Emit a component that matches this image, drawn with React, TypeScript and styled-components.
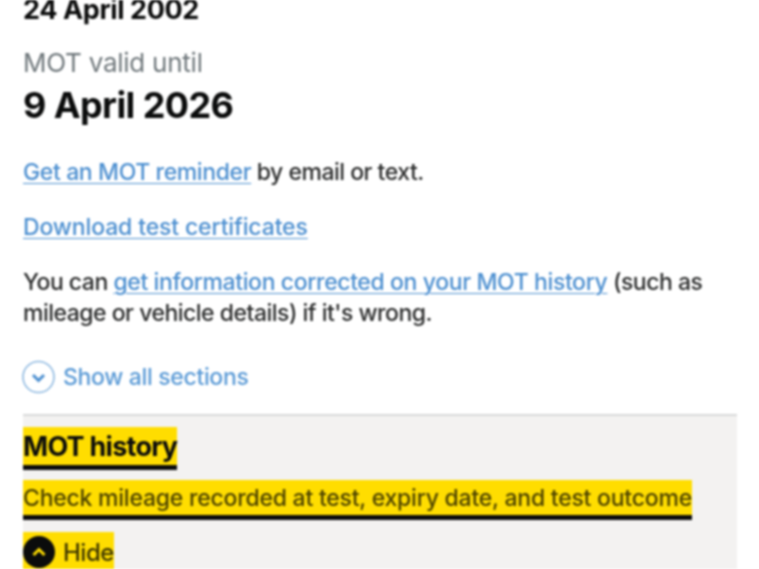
import React from "react";
import styled, { createGlobalStyle } from "styled-components";

const Global = createGlobalStyle`
  html, body { margin: 0; padding: 0; background: #fff; overflow: hidden; height: 569px; }
  body { font-family: "Inter", "Liberation Sans", sans-serif; color: #0b0c0c; }
`;

const Page = styled.main`
  width: 759px;
  height: 569px;
  overflow: hidden;
  box-sizing: border-box;
  padding: 0 22px 0 23px;
  filter: blur(0.9px);
`;

const Lift = styled.div`
  margin-top: -5px;
`;

const FirstDate = styled.div`
  font-size: 27px;
  line-height: 30px;
  font-weight: 700;
  letter-spacing: -0.4px;
  color: #0b0c0c;
`;

const BigDate = styled.div`
  margin-top: 7px;
  font-size: 36px;
  line-height: 40px;
  font-weight: 700;
  letter-spacing: -0.6px;
  color: #0b0c0c;
`;

const Label = styled.div`
  margin-top: 23px;
  font-size: 26px;
  line-height: 30px;
  font-weight: 400;
  letter-spacing: -0.25px;
  color: #6f777b;
`;

const Para = styled.p<{ $mt: number }>`
  margin: ${(p) => p.$mt}px 0 0;
  font-size: 23px;
  line-height: 31px;
  font-weight: 500;
  letter-spacing: -0.5px;
  color: #2b2c2c;
`;

const A = styled.a<{ $ls?: number }>`
  color: #4c8fd0;
  letter-spacing: ${(p) => p.$ls ?? -0.38}px;
  text-decoration: underline;
  text-decoration-thickness: 1px;
  text-underline-offset: 3px;
`;

const ShowAll = styled.div`
  display: flex;
  align-items: center;
  gap: 7px;
  margin-top: 31px;
  height: 34px;
  margin-left: -1px;
  font-size: 23px;
  font-weight: 500;
  letter-spacing: -0.33px;
  color: #5a9ad6;
`;

const Section = styled.section`
  margin-top: 20px;
  border-top: 2px solid #d8d9d9;
  background: #f3f2f1;
  height: 200px;
  padding-top: 11px;
`;

const Highlight = styled.div`
  width: fit-content;
  background: #ffdd00;
`;

const Heading = styled(Highlight)`
  height: 38px;
  line-height: 39px;
  font-size: 27px;
  font-weight: 700;
  letter-spacing: -0.75px;
  color: #0b0c0c;
  border-bottom: 5px solid #0b0c0c;
`;

const Summary = styled(Highlight)`
  margin-top: 10px;
  height: 35px;
  line-height: 36px;
  font-size: 23px;
  font-weight: 500;
  letter-spacing: -0.23px;
  color: #4d4300;
  border-bottom: 5px solid #0b0c0c;
`;

const Hide = styled(Highlight)`
  margin-top: 12px;
  height: 40px;
  display: flex;
  align-items: center;
  gap: 6px;
  font-size: 24px;
  font-weight: 500;
  letter-spacing: -0.5px;
  color: #3f3800;
`;

const Chevron = ({ open }: { open?: boolean }) => (
  <svg width="34" height="34" viewBox="0 0 34 34" aria-hidden>
    {open ? (
      <>
        <circle cx="16" cy="17" r="16" fill="#0b0c0c" />
        <path d="M10.5 20 16 14.5 21.5 20" fill="none" stroke="#ffdd00" strokeWidth="3" />
      </>
    ) : (
      <>
        <circle cx="16.5" cy="17" r="15.5" fill="none" stroke="#8db8e0" strokeWidth="1.6" />
        <path d="M11 15 16.5 20.5 22 15" fill="none" stroke="#4c8fd0" strokeWidth="3" />
      </>
    )}
  </svg>
);

export default function App() {
  return (
    <Page>
      <Global />
      <Lift>
        <FirstDate>24 April 2002</FirstDate>
        <Label>MOT valid until</Label>
        <BigDate>9 April 2026</BigDate>
        <Para $mt={32}>
          <A href="#">Get an MOT reminder</A> by email or text.
        </Para>
        <Para $mt={24}>
          <A href="#" $ls={-0.13}>Download test certificates</A>
        </Para>
        <Para $mt={24}>
          You can <A href="#">get information corrected on your MOT history</A> (such as mileage or vehicle details) if it's wrong.
        </Para>
        <ShowAll>
          <Chevron />
          Show all sections
        </ShowAll>
        <Section>
          <Heading>MOT history</Heading>
          <Summary>Check mileage recorded at test, expiry date, and test outcome</Summary>
          <Hide>
            <Chevron open />
            Hide
          </Hide>
        </Section>
      </Lift>
    </Page>
  );
}
